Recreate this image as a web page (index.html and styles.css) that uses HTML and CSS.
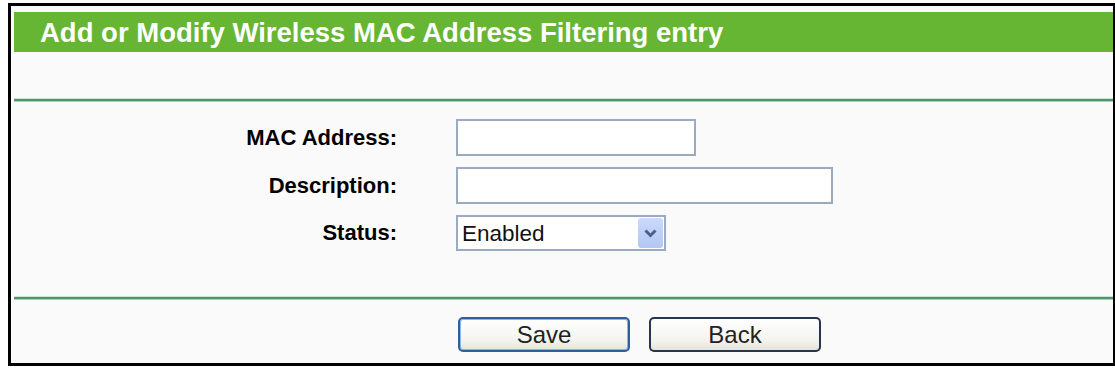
FILE: index.html
```html
<!DOCTYPE html>
<html lang="en">
<head>
    <meta charset="UTF-8">
    <title>Wireless MAC Address Filtering</title>
    <link rel="stylesheet" href="styles.css">
</head>
<body>
    <div class="panel">
        <div class="title">Add or Modify Wireless MAC Address Filtering entry</div>
        <div class="blank"></div>
        <div class="rule"></div>
        <form class="entry-form">
            <label class="label" for="mac">MAC Address:</label>
            <div><input type="text" id="mac" class="field field-mac"></div>
            <label class="label" for="desc">Description:</label>
            <div><input type="text" id="desc" class="field field-desc"></div>
            <label class="label" for="status">Status:</label>
            <div class="select-wrap">
                <select id="status" class="field field-status">
                    <option>Enabled</option>
                    <option>Disabled</option>
                </select>
                <span class="select-btn">
                    <svg width="13" height="9" viewBox="0 0 13 9"><path d="M1.5 1.5 L6.5 6.5 L11.5 1.5" fill="none" stroke="#4b5f8d" stroke-width="3"/></svg>
                </span>
            </div>
        </form>
        <div class="rule"></div>
        <div class="buttons">
            <button type="button" class="btn btn-default">Save</button>
            <button type="button" class="btn">Back</button>
        </div>
    </div>
</body>
</html>
```

FILE: styles.css
```css
body {
    margin: 0;
    padding: 3px 0 0 8px;
    background-color: #fff;
    font-family: "Liberation Sans", Arial, sans-serif;
}
.panel {
    width: 1107px;
    height: 363px;
    box-sizing: border-box;
    border: 3px solid #000;
    border-right-width: 2px;
    background-color: #fafafa;
    padding: 6px 0 0 3px;
}
.title {
    height: 40px;
    background-color: #67b633;
    color: #fff;
    font-weight: bold;
    font-size: 27.5px;
    line-height: 41px;
    padding-left: 26px;
}
.blank {
    height: 47px;
}
.rule {
    height: 2px;
    background-color: #4f9670;
    box-shadow: 0 1px 0 #a9d0b9, 0 -1px 0 #cfe4d6;
}
.entry-form {
    display: grid;
    grid-template-columns: 383px auto;
    column-gap: 59px;
    row-gap: 11px;
    align-items: center;
    margin: 0;
    padding: 18px 0 46px 0;
}
.label {
    text-align: right;
    font-weight: bold;
    font-size: 22px;
    color: #000;
}
.field {
    display: block;
    box-sizing: border-box;
    height: 37px;
    border: 2px solid #9aabc0;
    background-color: #fff;
    margin: 0;
    outline: none;
}
.field-mac {
    width: 240px;
}
.field-desc {
    width: 377px;
}
.select-wrap {
    position: relative;
    width: 210px;
}
.field-status {
    width: 210px;
    height: 36px;
    appearance: none;
    -webkit-appearance: none;
    font-family: "Liberation Sans", Arial, sans-serif;
    font-size: 22.5px;
    color: #111;
    padding: 0 0 0 4px;
    border-radius: 0;
}
.select-btn {
    position: absolute;
    top: 3px;
    right: 3px;
    width: 25px;
    height: 30px;
    border-radius: 3px;
    background: linear-gradient(#cad9fc, #b3c7f3);
    display: flex;
    align-items: center;
    justify-content: center;
    pointer-events: none;
}
.buttons {
    display: flex;
    gap: 19px;
    padding: 18px 0 0 444px;
}
.btn {
    width: 172px;
    height: 35px;
    box-sizing: border-box;
    border: 2px solid #25354d;
    border-radius: 5px;
    background: linear-gradient(#ffffff, #f3f3ee 70%, #e4e3da);
    font-family: "Liberation Sans", Arial, sans-serif;
    font-size: 24px;
    color: #222;
    padding: 0;
    cursor: pointer;
}
.btn-default {
    border-color: #2d5f9e;
    box-shadow: inset 0 0 0 1px #8eb4e6;
}
```
